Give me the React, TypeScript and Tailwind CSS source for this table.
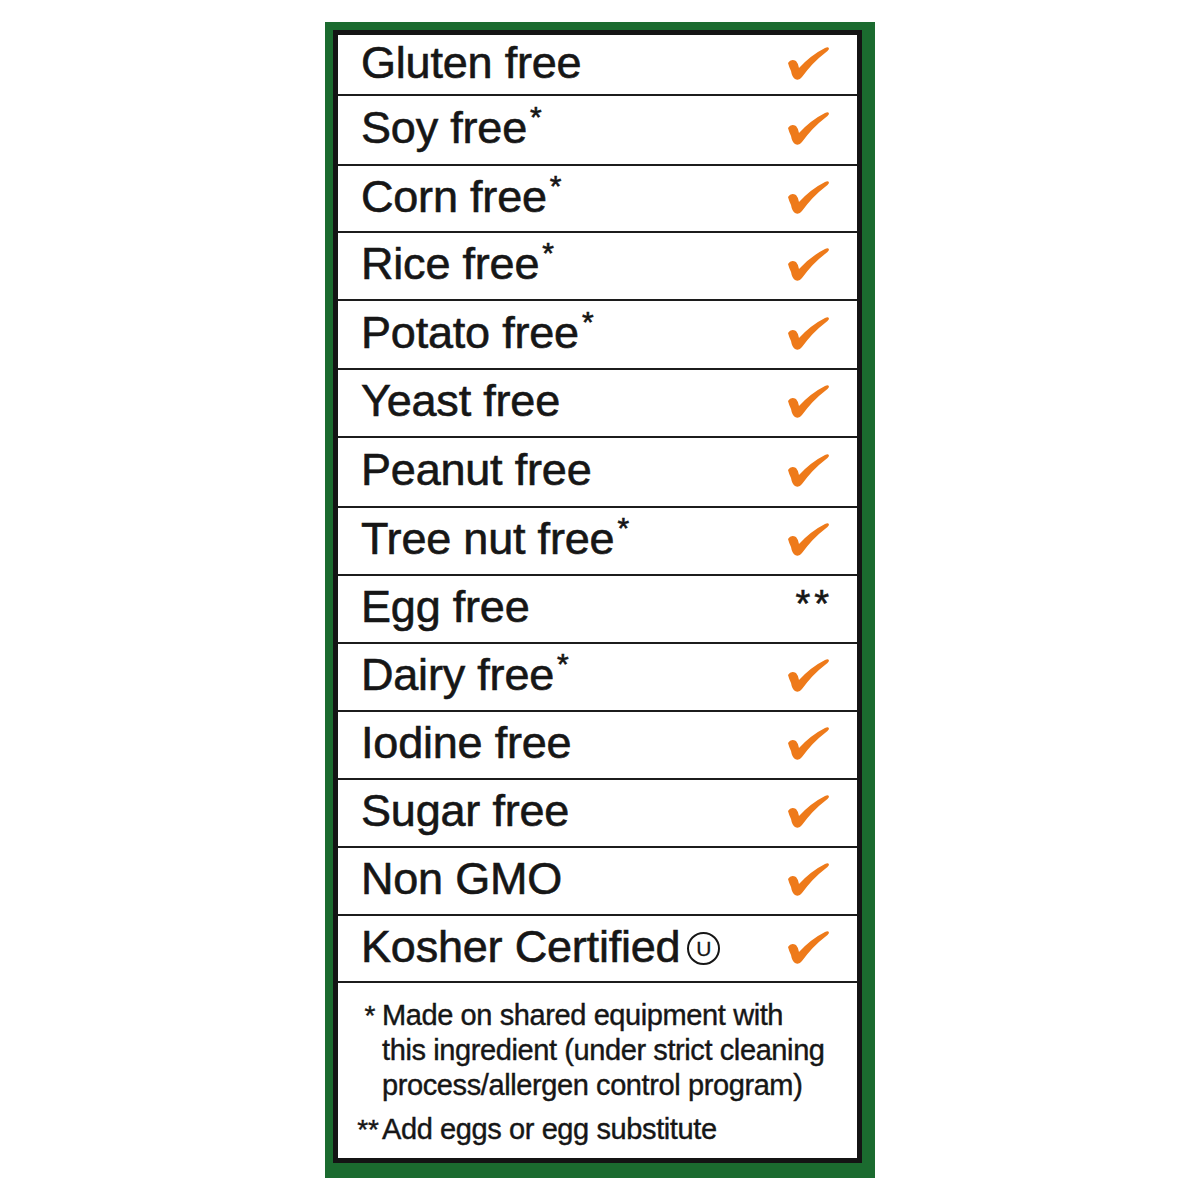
import React from 'react';

const rows: { label: string; star?: boolean; mark: 'check' | 'stars' | 'kosher'; h: string }[] = [
  { label: 'Gluten free', mark: 'check', h: 'h-[61px]' },
  { label: 'Soy free', star: true, mark: 'check', h: 'h-[70px]' },
  { label: 'Corn free', star: true, mark: 'check', h: 'h-[67px]' },
  { label: 'Rice free', star: true, mark: 'check', h: 'h-[68px]' },
  { label: 'Potato free', star: true, mark: 'check', h: 'h-[69px]' },
  { label: 'Yeast free', mark: 'check', h: 'h-[68px]' },
  { label: 'Peanut free', mark: 'check', h: 'h-[70px]' },
  { label: 'Tree nut free', star: true, mark: 'check', h: 'h-[68px]' },
  { label: 'Egg free', mark: 'stars', h: 'h-[68px]' },
  { label: 'Dairy free', star: true, mark: 'check', h: 'h-[68px]' },
  { label: 'Iodine free', mark: 'check', h: 'h-[68px]' },
  { label: 'Sugar free', mark: 'check', h: 'h-[68px]' },
  { label: 'Non GMO', mark: 'check', h: 'h-[68px]' },
  { label: 'Kosher Certified', mark: 'kosher', h: 'h-[67px]' },
];

function Check() {
  return (
    <svg width="44" height="36" viewBox="0 0 44 36" className="block">
      <path
        d="M1 17 Q4 12 9 15 Q11 17 12 22 Q24 9 38 2 Q42 0 42 3 Q41 5 38 7 Q26 16 15 31 Q12 35 8 33 Q5 31 4 25 Q2 21 1 17 Z"
        fill="#ee7a1a"
      />
    </svg>
  );
}

export default function App() {
  return (
    <div
      className="min-h-screen bg-white flex justify-center items-start pt-[22px]"
      style={{ fontFamily: '"Liberation Sans", Arial, sans-serif' }}
    >
      <div className="w-[550px] bg-[#1b6b2f] pl-[8px] pt-[8px] pr-[13px] pb-[15px]">
        <div className="border-[5px] border-[#141414] bg-white text-[#161616]">
          {rows.map((r) => (
            <div
              key={r.label}
              className={`flex items-center justify-between border-b-2 border-[#1c1c1c] pl-[23px] pr-[26px] ${r.h}`}
            >
              <div className="flex items-center text-[45px] leading-none tracking-[-0.2px] pb-[5px] [-webkit-text-stroke:0.6px_#161616]">
                <span>{r.label}</span>
                {r.star && <span className="text-[30px] self-start -mt-[3px] ml-[3px]">*</span>}
                {r.mark === 'kosher' && (
                  <span className="ml-[7px] mt-[5px] w-[33px] h-[33px] rounded-full border-[2.5px] border-[#161616] flex items-center justify-center text-[21px] leading-none tracking-normal [-webkit-text-stroke:0.3px_#161616]">
                    U
                  </span>
                )}
              </div>
              {r.mark === 'stars' ? (
                <div className="self-start mt-[9px] text-[38px] leading-none tracking-[4px] -mr-[2px] [-webkit-text-stroke:0.6px_#161616]">**</div>
              ) : (
                <div className="pb-[2px]">
                  <Check />
                </div>
              )}
            </div>
          ))}
          <div className="pt-[15px] pb-[11px] text-[29px] leading-[35px] tracking-[-0.4px] [-webkit-text-stroke:0.4px_#161616]">
            <div className="grid grid-cols-[44px_1fr]">
              <div className="text-right pr-[7px] text-[28px]">*</div>
              <div>
                Made on shared equipment with
                <br />
                this ingredient (under strict cleaning
                <br />
                process/allergen control program)
              </div>
            </div>
            <div className="grid grid-cols-[44px_1fr] mt-[9px]">
              <div className="text-right pr-[3px] text-[28px] tracking-[0px]">**</div>
              <div>Add eggs or egg substitute</div>
            </div>
          </div>
        </div>
      </div>
    </div>
  );
}
